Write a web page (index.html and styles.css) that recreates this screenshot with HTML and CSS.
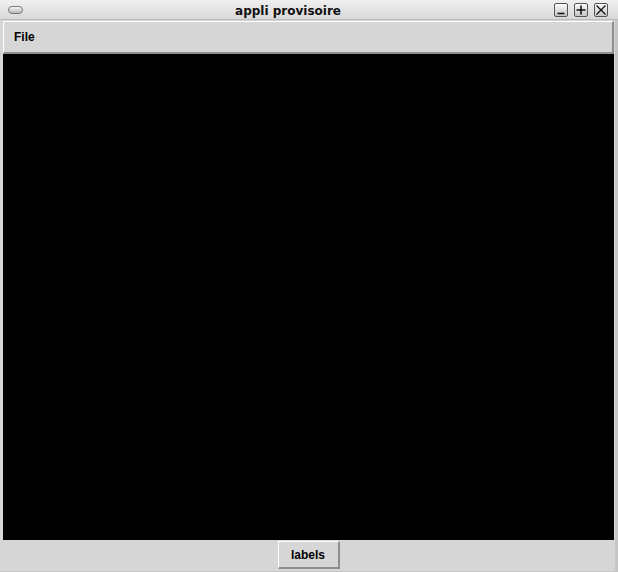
FILE: index.html
```html
<!DOCTYPE html>
<html>
<head>
<meta charset="utf-8">
<link rel="stylesheet" href="styles.css">
</head>
<body>
<div class="window">
  <div class="titlebar">
    <div class="menu-pill"></div>
    <div class="title">appli provisoire</div>
    <div class="wbuttons">
      <div class="wbtn"><svg width="14" height="14" viewBox="0 0 14 14"><path d="M3.5 10.5h7" stroke="#111" stroke-width="1.6"/></svg></div>
      <div class="wbtn"><svg width="14" height="14" viewBox="0 0 14 14"><path d="M7 2.5v9M2.5 7h9" stroke="#111" stroke-width="1.6"/></svg></div>
      <div class="wbtn"><svg width="14" height="14" viewBox="0 0 14 14"><path d="M2.5 2.5l9 9M11.5 2.5l-9 9" stroke="#111" stroke-width="1.3"/></svg></div>
    </div>
  </div>
  <div class="content">
    <div class="menubar"><span class="menu-item">File</span></div>
    <div class="canvas"></div>
    <div class="bottom">
      <button class="btn">labels</button>
    </div>
  </div>
</div>
</body>
</html>
```
FILE: styles.css
```css
html, body {
  margin: 0;
  padding: 0;
}
body {
  width: 618px;
  height: 572px;
  background: #d6d6d6;
  overflow: hidden;
  font-family: "Liberation Sans", Arial, sans-serif;
}
.window {
  display: flex;
  flex-direction: column;
  width: 618px;
  height: 572px;
  background: #d6d6d6;
}
.titlebar {
  position: relative;
  height: 20px;
  border-bottom: 1px solid #bcbcbc;
  background: linear-gradient(#f0f0f0, #d8d8d8);
  display: flex;
  align-items: center;
}
.menu-pill {
  position: absolute;
  left: 8px;
  top: 6px;
  width: 13px;
  height: 6px;
  border: 1px solid #7a7a7a;
  border-radius: 4px;
  background: linear-gradient(#f4f4f4, #b8b8b8);
}
.title {
  flex: 1;
  text-align: center;
  font-family: "DejaVu Sans", sans-serif;
  font-weight: bold;
  font-size: 12px;
  color: #111;
  padding-right: 42px;
  padding-top: 2px;
}
.wbuttons {
  position: absolute;
  right: 10px;
  top: 3px;
  display: flex;
  gap: 6px;
}
.wbtn {
  width: 14px;
  height: 14px;
  border: 1px solid #555;
  border-radius: 2px;
  background: linear-gradient(#fafafa, #c6c6c6);
  box-sizing: border-box;
  display: flex;
}
.wbtn svg {
  margin: -1px;
}
.content {
  flex: 1;
  display: flex;
  flex-direction: column;
  padding: 1px 1px 2px 3px;
  border-right: 3px solid #c6c6c6;
  border-bottom: 1px solid #c6c6c6;
}
.menubar {
  height: 30px;
  border-top: 1px solid #ffffff;
  border-left: 1px solid #ffffff;
  border-bottom: 2px solid #8e8e8e;
  border-right: 2px solid #8e8e8e;
  background: #d6d6d6;
  display: flex;
  align-items: center;
  padding-left: 10px;
}
.menu-item {
  font-weight: bold;
  font-size: 12px;
  color: #000;
}
.canvas {
  height: 486px;
  background: #000;
}
.bottom {
  flex: 1;
  display: flex;
  justify-content: center;
  align-items: flex-start;
  padding-top: 1px;
}
.btn {
  width: 62px;
  height: 28px;
  box-sizing: border-box;
  border-top: 1px solid #ffffff;
  border-left: 1px solid #ffffff;
  border-right: 2px solid #8e8e8e;
  border-bottom: 2px solid #8e8e8e;
  background: #d6d6d6;
  font-family: "Liberation Sans", Arial, sans-serif;
  font-weight: bold;
  font-size: 12px;
  color: #000;
  padding: 0;
  margin: 0;
}
```
